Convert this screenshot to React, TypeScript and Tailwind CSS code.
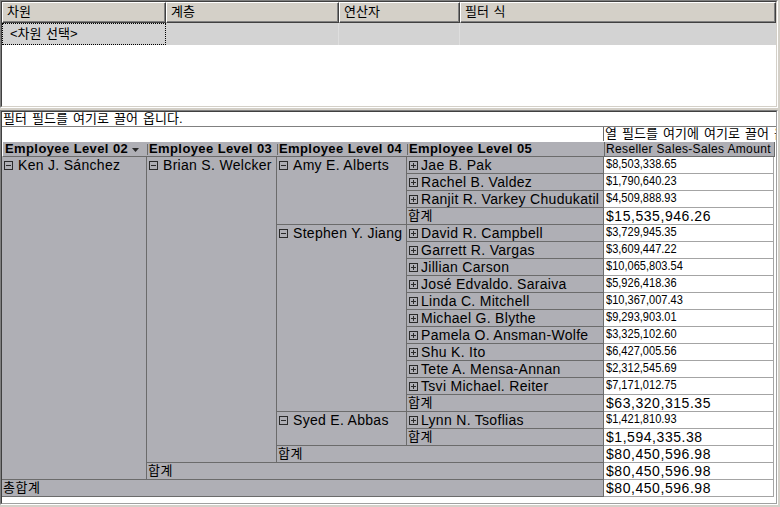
import React from "react";

function Toggle({ plus }: { plus?: boolean }) {
  return (
    <svg width="9" height="9" viewBox="0 0 9 9" className="shrink-0">
      <rect x="0.5" y="0.5" width="8" height="8" fill="none" stroke="#2a2a2a" />
      <path d="M2 4.5H7" stroke="#2a2a2a" />
      {plus && <path d="M4.5 2V7" stroke="#2a2a2a" />}
    </svg>
  );
}

type Row = { row: string; vrow: string; l05: string | null; total?: boolean; value: string };

const rows: Row[] = [
  { row: "row-start-1", vrow: "row-start-1", l05: "Jae B. Pak", value: "$8,503,338.65" },
  { row: "row-start-2", vrow: "row-start-2", l05: "Rachel B. Valdez", value: "$1,790,640.23" },
  { row: "row-start-3", vrow: "row-start-3", l05: "Ranjit R. Varkey Chudukatil", value: "$4,509,888.93" },
  { row: "row-start-4", vrow: "row-start-4", l05: "합계", total: true, value: "$15,535,946.26" },
  { row: "row-start-5", vrow: "row-start-5", l05: "David R. Campbell", value: "$3,729,945.35" },
  { row: "row-start-6", vrow: "row-start-6", l05: "Garrett R. Vargas", value: "$3,609,447.22" },
  { row: "row-start-7", vrow: "row-start-7", l05: "Jillian Carson", value: "$10,065,803.54" },
  { row: "row-start-8", vrow: "row-start-8", l05: "José Edvaldo. Saraiva", value: "$5,926,418.36" },
  { row: "row-start-9", vrow: "row-start-9", l05: "Linda C. Mitchell", value: "$10,367,007.43" },
  { row: "row-start-10", vrow: "row-start-10", l05: "Michael G. Blythe", value: "$9,293,903.01" },
  { row: "row-start-11", vrow: "row-start-11", l05: "Pamela O. Ansman-Wolfe", value: "$3,325,102.60" },
  { row: "row-start-12", vrow: "row-start-12", l05: "Shu K. Ito", value: "$6,427,005.56" },
  { row: "row-start-13", vrow: "row-start-13", l05: "Tete A. Mensa-Annan", value: "$2,312,545.69" },
  { row: "row-start-14", vrow: "row-start-14", l05: "Tsvi Michael. Reiter", value: "$7,171,012.75" },
  { row: "row-start-15", vrow: "row-start-15", l05: "합계", total: true, value: "$63,320,315.35" },
  { row: "row-start-16", vrow: "row-start-16", l05: "Lynn N. Tsoflias", value: "$1,421,810.93" },
  { row: "row-start-17", vrow: "row-start-17", l05: "합계", total: true, value: "$1,594,335.38" },
  { row: "row-start-18", vrow: "row-start-18", l05: null, total: true, value: "$80,450,596.98" },
  { row: "row-start-19", vrow: "row-start-19", l05: null, total: true, value: "$80,450,596.98" },
  { row: "row-start-20", vrow: "row-start-20", l05: null, total: true, value: "$80,450,596.98" },
];

const GRAY = "bg-[#afafb5] border-r border-b border-[#6b6b6b] overflow-hidden whitespace-nowrap";

function HeadCell({ w, children }: { w: string; children: React.ReactNode }) {
  return (
    <div
      className={`${w} h-full bg-[#d4d0c8] border-t border-l border-white border-r border-b border-r-[#404040] border-b-[#404040] shadow-[inset_-1px_-1px_0_#808080] pl-[4px] leading-[18px] whitespace-nowrap overflow-hidden [word-spacing:1px]`}
    >
      {children}
    </div>
  );
}

function Member({ name, plus }: { name: string; plus?: boolean }) {
  return (
    <div className={`flex items-center h-[16px] ${plus ? "pl-[2px] gap-[3px]" : "pl-[2px] gap-[5px]"}`}>
      <Toggle plus={plus} />
      <span className="text-[14px] leading-[16px] tracking-[0.3px]">{name}</span>
    </div>
  );
}

function Total({ label }: { label: string }) {
  return <div className="pl-[1px] text-[13px] leading-[16px] tracking-[0.5px]">{label}</div>;
}

export default function App() {
  return (
    <div className="w-[780px] h-[507px] bg-[#d4d0c8] overflow-hidden font-['Liberation_Sans','Noto_Sans_CJK_KR',sans-serif] text-black">
      {/* Top panel */}
      <div className="w-[778px] h-[108px] border border-[#808080] border-r-white border-b-white">
        <div className="h-full border border-[#404040] border-r-[#d4d0c8] border-b-[#d4d0c8] bg-white flex flex-col">
          <div className="flex h-[21px] text-[13px]">
            <HeadCell w="w-[164px]">차원</HeadCell>
            <HeadCell w="w-[173px]">계층</HeadCell>
            <HeadCell w="w-[121px]">연산자</HeadCell>
            <HeadCell w="flex-1">필터 식</HeadCell>
          </div>
          <div className="flex h-[22px] bg-[#d3d3d3] text-[13px]">
            <div className="w-[164px] border border-dotted border-black pl-[7px] leading-[19px] whitespace-nowrap [word-spacing:1px]">
              &lt;차원 선택&gt;
            </div>
            <div className="w-[173px] border-r border-[#dedede]" />
            <div className="w-[121px] border-r border-[#dedede]" />
            <div className="flex-1" />
          </div>
          <div className="flex-1" />
        </div>
      </div>
      <div className="h-[2px]" />
      {/* Bottom panel */}
      <div className="w-[778px] h-[395px] border border-[#808080] border-r-white border-b-white">
        <div className="h-full border border-[#404040] border-r-[#a0a0a0] border-b-[#a0a0a0] bg-white flex flex-col overflow-hidden">
          <div className="h-[15px] shrink-0 border-b border-[#808080] text-[13px] leading-[14px] pl-[1px] whitespace-nowrap [word-spacing:1.5px]">
            필터 필드를 여기로 끌어 옵니다.
          </div>
          <div className="h-[14px] shrink-0 flex">
            <div className="w-[601px] shrink-0" />
            <div className="flex-1 border-l border-[#6b6b6b] pl-[1px] text-[13px] leading-[13px] whitespace-nowrap overflow-hidden [word-spacing:1.5px]">
              열 필드를 여기에 여기로 끌어 옵니다
            </div>
          </div>
          {/* Header row */}
          <div className="h-[16px] shrink-0 grid grid-cols-[145px_130px_130px_197px_170px] bg-[#afafb5] border-t border-l border-white border-b border-b-[#6b6b6b] text-[13px] font-bold leading-[14px] w-[773px] tracking-[0.4px]">
            <div className="relative flex items-center pl-[2px] whitespace-nowrap">
              <span>Employee Level 02</span>
              <svg width="7" height="4" viewBox="0 0 7 4" className="ml-[4px] mt-[2px]">
                <path d="M0 0H7L3.5 4Z" fill="#2a2a2a" />
              </svg>
              <div className="absolute right-0 top-[2px] bottom-[1px] w-px bg-[#6b6b6b]" />
            </div>
            <div className="relative flex items-center pl-[1px] whitespace-nowrap overflow-hidden">
              <span>Employee Level 03</span>
              <div className="absolute right-0 top-[2px] bottom-[1px] w-px bg-[#6b6b6b]" />
            </div>
            <div className="relative flex items-center pl-[1px] whitespace-nowrap overflow-hidden">
              <span>Employee Level 04</span>
              <div className="absolute right-0 top-[2px] bottom-[1px] w-px bg-[#6b6b6b]" />
            </div>
            <div className="flex items-center pl-[1px] whitespace-nowrap border-r border-[#6b6b6b]">
              <span>Employee Level 05</span>
            </div>
            <div className="border-r border-[#6b6b6b] flex items-center pl-[1px] font-normal text-[12px] whitespace-nowrap overflow-hidden tracking-[0.35px]">
              Reseller Sales-Sales Amount
            </div>
          </div>
          {/* Data grid */}
          <div className="shrink-0 grid grid-cols-[145px_130px_130px_197px_170px] grid-rows-[repeat(20,17px)] w-[772px]">
            <div className={`${GRAY} col-start-1 row-start-1 row-span-19`}>
              <Member name="Ken J. Sánchez" />
            </div>
            <div className={`${GRAY} col-start-2 row-start-1 row-span-18`}>
              <Member name="Brian S. Welcker" />
            </div>
            <div className={`${GRAY} col-start-3 row-start-1 row-span-4`}>
              <Member name="Amy E. Alberts" />
            </div>
            <div className={`${GRAY} col-start-3 row-start-5 row-span-11`}>
              <Member name="Stephen Y. Jiang" />
            </div>
            <div className={`${GRAY} col-start-3 row-start-16 row-span-2`}>
              <Member name="Syed E. Abbas" />
            </div>
            <div className={`${GRAY} col-start-3 col-span-2 row-start-18`}>
              <Total label="합계" />
            </div>
            <div className={`${GRAY} col-start-2 col-span-3 row-start-19`}>
              <Total label="합계" />
            </div>
            <div className={`${GRAY} col-start-1 col-span-4 row-start-20`}>
              <Total label="총합계" />
            </div>
            {rows.map((r, i) =>
              r.l05 === null ? null : (
                <div key={"n" + i} className={`${GRAY} col-start-4 ${r.row}`}>
                  {r.total ? <Total label={r.l05} /> : <Member name={r.l05} plus />}
                </div>
              )
            )}
            {rows.map((r, i) => (
              <div
                key={"v" + i}
                className={`col-start-5 ${r.vrow} bg-white border-r border-b border-[#a4a4a4] overflow-hidden whitespace-nowrap pl-[2px]`}
              >
                {r.total ? (
                  <span className="block text-[14px] leading-[17px] tracking-[0.55px]">{r.value}</span>
                ) : (
                  <span className="inline-block origin-left scale-x-[0.85] text-[13px] leading-[13px] align-top">
                    {r.value}
                  </span>
                )}
              </div>
            ))}
          </div>
          <div className="flex-1" />
        </div>
      </div>
    </div>
  );
}
